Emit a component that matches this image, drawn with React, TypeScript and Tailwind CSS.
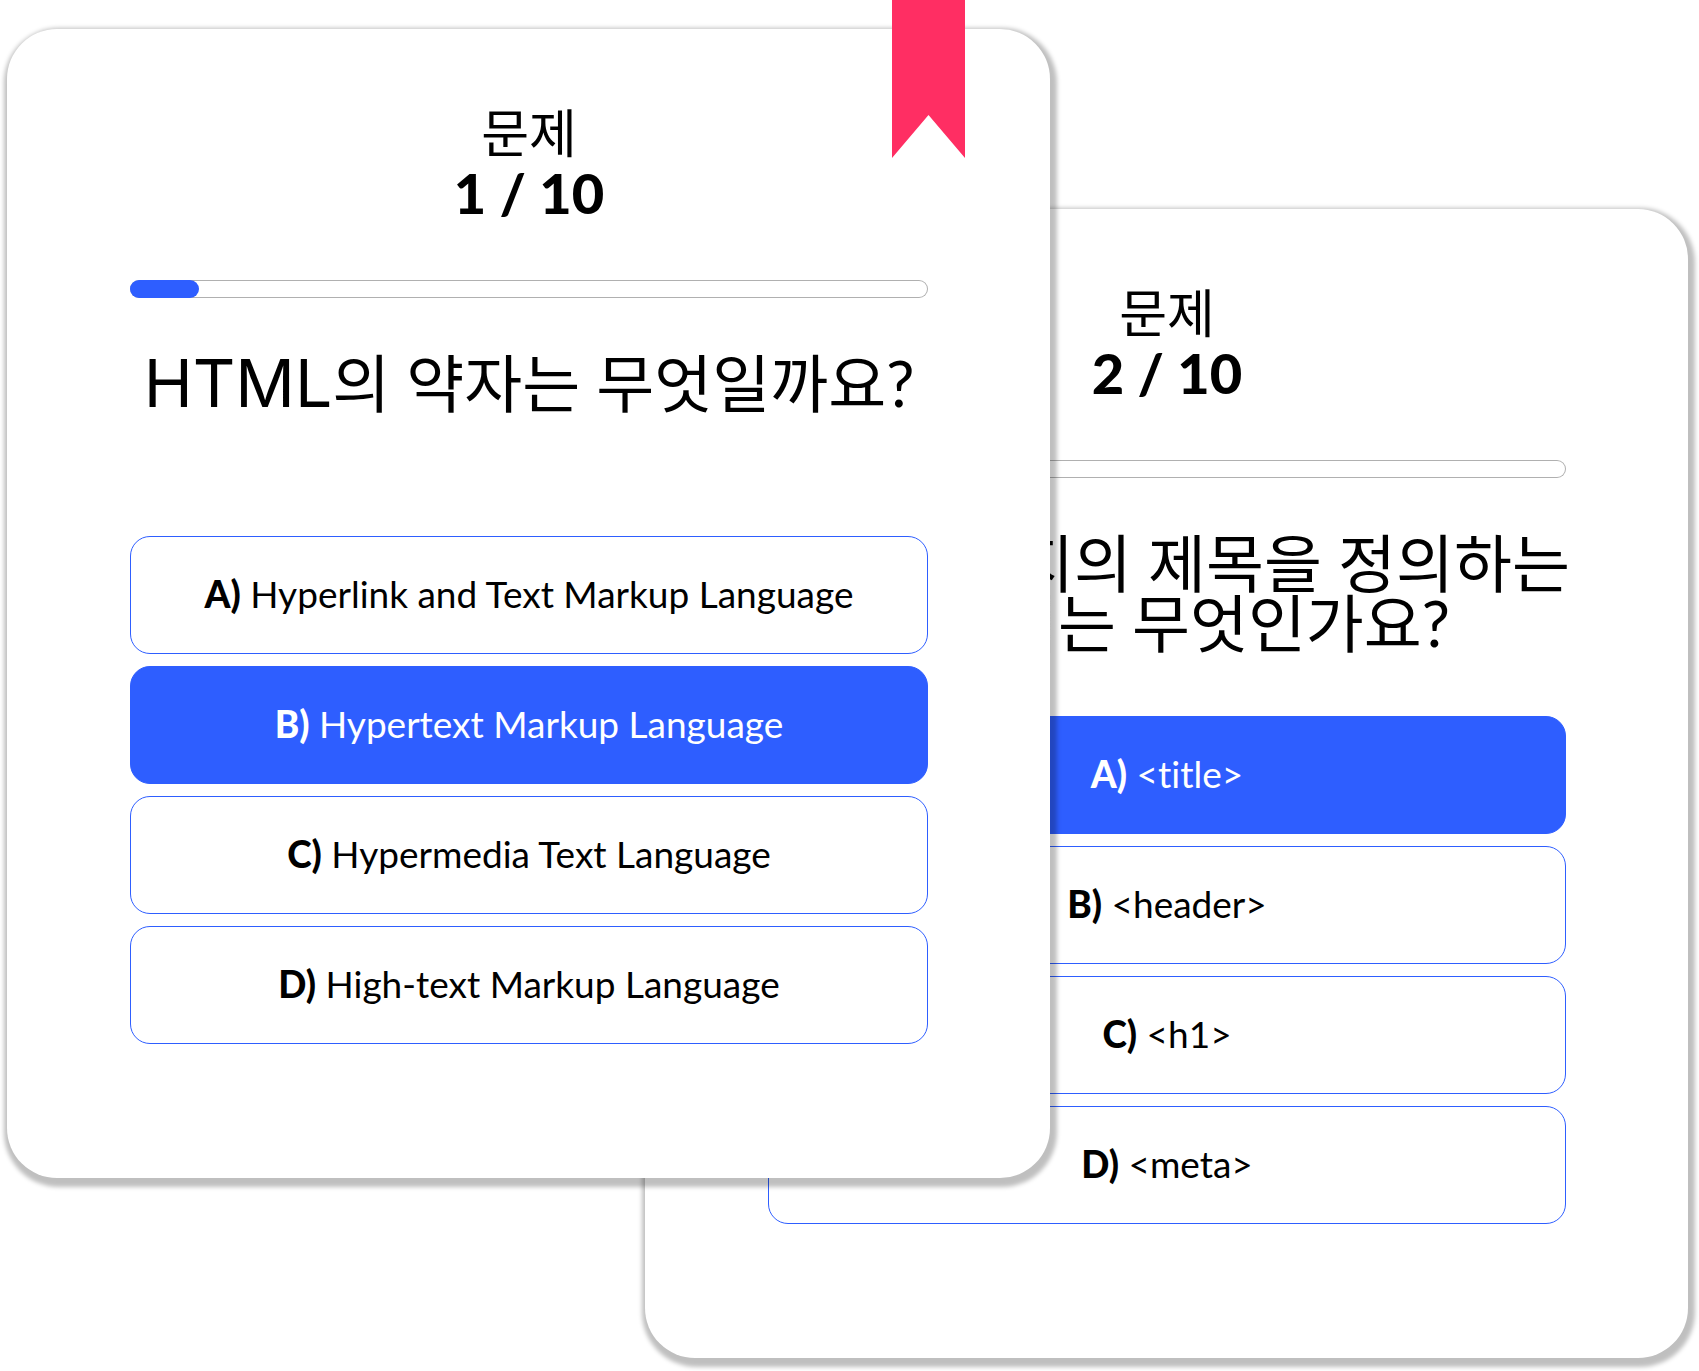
type Option = { id: string; text: string };

type Question = {
  number: number;
  total: number;
  progress: number;
  term?: string;
  lines: string[];
  options: Option[];
  selected: string;
};

const first: Question = {
  number: 1,
  total: 10,
  progress: 1,
  term: "HTML",
  lines: ["의 약자는 무엇일까요?"],
  options: [
    { id: "A", text: "Hyperlink and Text Markup Language" },
    { id: "B", text: "Hypertext Markup Language" },
    { id: "C", text: "Hypermedia Text Language" },
    { id: "D", text: "High-text Markup Language" },
  ],
  selected: "B",
};

const second: Question = {
  number: 2,
  total: 10,
  progress: 2,
  lines: ["해당 페이지의 제목을 정의하는", "명령어는 무엇인가요?"],
  options: [
    { id: "A", text: "<title>" },
    { id: "B", text: "<header>" },
    { id: "C", text: "<h1>" },
    { id: "D", text: "<meta>" },
  ],
  selected: "A",
};

function Bookmark() {
  return (
    <svg
      className="absolute -top-[29px] right-[85px] h-[158px] w-[73px] fill-[#ff2e63]"
      viewBox="0 0 73 158"
      aria-hidden="true"
    >
      <path d="M0 0H73V158L36.5 115L0 158Z" />
    </svg>
  );
}

function Card({ question, className, marked }: { question: Question; className: string; marked?: boolean }) {
  return (
    <section
      className={`relative min-w-0 rounded-[50px] bg-white pt-[74px] pr-[122px] pb-[134px] pl-[123px] text-center shadow-[2px_4px_4px_5px_rgba(0,0,0,0.25)] ${className}`}
    >
      {marked && <Bookmark />}
      <header className="leading-[60px]">
        <p className="text-[52px]">문제</p>
        <p className="text-[56px] font-black">
          {question.number} / {question.total}
        </p>
      </header>
      <div
        role="progressbar"
        aria-label="진행률"
        aria-valuenow={question.progress}
        aria-valuemax={question.total}
        className="mt-[57px] h-[18px] rounded-full bg-white ring-1 ring-[#b0b0b0] ring-inset"
      >
        <div
          className="h-full rounded-full bg-[#2e5eff]"
          style={{ width: `${(question.progress / question.total) * 86}%` }}
        />
      </div>
      <h2 className="mt-[55px] min-h-[120px] text-[63px] leading-[60px] whitespace-nowrap">
        {question.lines.map((line, index) => (
          <span key={line} className="block">
            {index === 0 && question.term && (
              <abbr className="font-['Inter',sans-serif] text-[66px] no-underline">{question.term}</abbr>
            )}
            {line}
          </span>
        ))}
      </h2>
      <div className="mt-[63px] flex flex-col gap-3">
        {question.options.map((option) => {
          const on = option.id === question.selected;
          return (
            <button
              key={option.id}
              type="button"
              aria-pressed={on}
              className={`h-[118px] rounded-[20px] border border-[#2e5eff] pb-0.5 text-[37px] [font-variant-ligatures:none] ${
                on ? "bg-[#2e5eff] text-white" : "bg-white text-black"
              }`}
            >
              <b className="font-black">{option.id})</b> {option.text}
            </button>
          );
        })}
      </div>
    </section>
  );
}

export default function App() {
  return (
    <main className="grid grid-cols-[638fr_405fr_638fr] items-start bg-white pt-[29px] pr-[11px] pb-[13px] pl-[7px] font-['Lato','Noto_Sans_CJK_KR',sans-serif] text-black">
      <Card question={first} marked className="z-10 col-start-1 col-end-3 row-start-1" />
      <Card question={second} className="col-start-2 col-end-4 row-start-1 mt-[180px]" />
    </main>
  );
}
